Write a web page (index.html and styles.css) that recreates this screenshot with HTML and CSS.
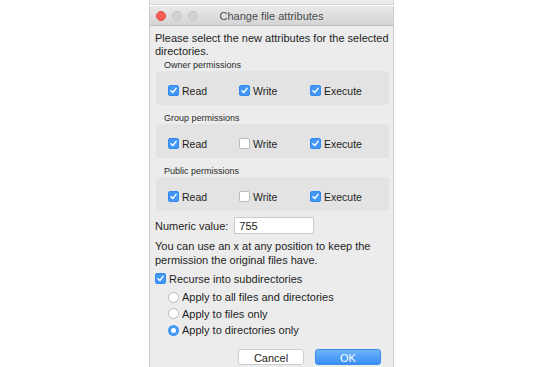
FILE: index.html
```html
<!DOCTYPE html>
<html>
<head>
    <title>Change file attributes</title>
    <link rel="stylesheet" href="styles.css">
</head>
<body>
    <div class="screen">
        <div class="behind"></div>
        <div class="window">
            <div class="titlebar">
                <div class="lights">
                    <span class="light close"></span>
                    <span class="light"></span>
                    <span class="light"></span>
                </div>
                <div class="title">Change file attributes</div>
            </div>

            <div class="content">
                <p class="text">Please select the new attributes for the selected directories.</p>

                <div class="group-label">Owner permissions</div>
                <div class="group">
                    <label class="opt"><span class="check on"><svg viewBox="0 0 10 10"><path d="M2.2 5.2 L4.2 7.2 L7.9 2.6"/></svg></span>Read</label>
                    <label class="opt"><span class="check on"><svg viewBox="0 0 10 10"><path d="M2.2 5.2 L4.2 7.2 L7.9 2.6"/></svg></span>Write</label>
                    <label class="opt"><span class="check on"><svg viewBox="0 0 10 10"><path d="M2.2 5.2 L4.2 7.2 L7.9 2.6"/></svg></span>Execute</label>
                </div>

                <div class="group-label">Group permissions</div>
                <div class="group">
                    <label class="opt"><span class="check on"><svg viewBox="0 0 10 10"><path d="M2.2 5.2 L4.2 7.2 L7.9 2.6"/></svg></span>Read</label>
                    <label class="opt"><span class="check"></span>Write</label>
                    <label class="opt"><span class="check on"><svg viewBox="0 0 10 10"><path d="M2.2 5.2 L4.2 7.2 L7.9 2.6"/></svg></span>Execute</label>
                </div>

                <div class="group-label">Public permissions</div>
                <div class="group">
                    <label class="opt"><span class="check on"><svg viewBox="0 0 10 10"><path d="M2.2 5.2 L4.2 7.2 L7.9 2.6"/></svg></span>Read</label>
                    <label class="opt"><span class="check"></span>Write</label>
                    <label class="opt"><span class="check on"><svg viewBox="0 0 10 10"><path d="M2.2 5.2 L4.2 7.2 L7.9 2.6"/></svg></span>Execute</label>
                </div>

                <div class="numeric">
                    <span>Numeric value:</span>
                    <div class="field">755</div>
                </div>

                <p class="text note">You can use an x at any position to keep the permission the original files have.</p>

                <label class="recurse"><span class="check on"><svg viewBox="0 0 10 10"><path d="M2.2 5.2 L4.2 7.2 L7.9 2.6"/></svg></span>Recurse into subdirectories</label>

                <div class="radios">
                    <label class="radio-row"><span class="radio"></span>Apply to all files and directories</label>
                    <label class="radio-row"><span class="radio"></span>Apply to files only</label>
                    <label class="radio-row"><span class="radio on"></span>Apply to directories only</label>
                </div>

                <div class="buttons">
                    <div class="btn">Cancel</div>
                    <div class="btn primary">OK</div>
                </div>
            </div>
        </div>
    </div>
</body>
</html>
```

FILE: styles.css
```css
body{
    margin: 0;
    background: #ffffff;
    font-family: "Liberation Sans", Arial, sans-serif;
    color: #1e1e1e;
    font-size: 11px;
}

.screen{
    margin-left: 149px;
    width: 245px;
}

.behind{
    height: 4px;
    background: #ebebeb;
    border: 1px solid #d2d2d2;
    border-top: none;
}

.window{
    height: 362px;
    margin-top: 1px;
    background: #ececec;
    border-left: 1px solid #cbcbcb;
    border-right: 1px solid #cbcbcb;
}

.titlebar{
    height: 19px;
    position: relative;
    display: flex;
    align-items: center;
    justify-content: center;
    background: linear-gradient(#e9e9e9, #d5d5d5);
    border-bottom: 1px solid #bdbdbd;
    border-radius: 4px 4px 0 0;
}

.lights{
    position: absolute;
    left: 6px;
    top: 5px;
    display: flex;
    gap: 6px;
}

.light{
    width: 10px;
    height: 10px;
    border-radius: 50%;
    background: #d3d3d3;
    border: 0.5px solid #c4c4c4;
    box-sizing: border-box;
}

.light.close{
    background: #fc5f57;
    border-color: #e14942;
}

.title{
    color: #4b4b4b;
    font-size: 11px;
}

.content{
    padding: 6px 0 0 5px;
}

.text{
    margin: 0;
    line-height: 13px;
    width: 236px;
}

.group-label{
    font-size: 9px;
    line-height: 12px;
    margin: 1px 0 0 9px;
    color: #2a2a2a;
}

.group{
    display: flex;
    margin: 0 4px 7px 1px;
    padding: 14px 0 9px 12px;
    background: #e3e3e3;
    border-radius: 3px;
}

.opt{
    width: 71px;
    display: flex;
    align-items: center;
    font-size: 10.5px;
    line-height: 10px;
}

.check{
    width: 11px;
    height: 11px;
    box-sizing: border-box;
    border-radius: 2px;
    background: #ffffff;
    border: 1px solid #bcbcbc;
    margin-right: 3px;
    display: flex;
    align-items: center;
    justify-content: center;
}

.check.on{
    background: #4398f7;
    border-color: #3489ec;
}

.check svg{
    width: 9px;
    height: 9px;
    fill: none;
    stroke: #ffffff;
    stroke-width: 1.6;
    stroke-linecap: round;
    stroke-linejoin: round;
}

.numeric{
    display: flex;
    align-items: center;
    margin-top: -1px;
    gap: 6px;
}

.field{
    height: 17px;
    line-height: 17px;
    padding-left: 4px;
    background: #ffffff;
    border: 1px solid #c9c9c9;
    box-sizing: border-box;
    width: 80px;
}

.note{
    margin-top: 5px;
    line-height: 14px;
}

.recurse{
    display: flex;
    align-items: center;
    margin-top: 5px;
    height: 13px;
}

.radios{
    margin: 4px 0 0 13px;
}

.radio-row{
    display: flex;
    align-items: center;
    height: 16.5px;
}

.radio{
    width: 11px;
    height: 11px;
    box-sizing: border-box;
    border-radius: 50%;
    border: 1px solid #b9b9b9;
    background: #ffffff;
    margin-right: 3px;
}

.radio.on{
    border: 3.5px solid #4398f7;
    background: #ffffff;
}

.buttons{
    display: flex;
    justify-content: flex-end;
    gap: 11px;
    margin: 10px 12px 0 0;
}

.btn{
    width: 66px;
    height: 16px;
    line-height: 16px;
    text-align: center;
    background: #ffffff;
    border: 1px solid #cdcdcd;
    border-radius: 3px;
    box-sizing: border-box;
}

.btn.primary{
    background: linear-gradient(#6cb3fa, #3a8ef5);
    border-color: #3d8cf0;
    color: #ffffff;
}
```
